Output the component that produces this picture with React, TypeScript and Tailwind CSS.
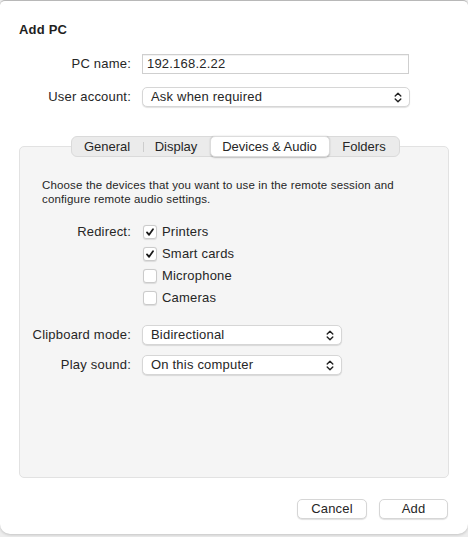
import React from "react";

const font = { fontFamily: '"Liberation Sans", Arial, sans-serif' };

function Chevrons() {
  return (
    <svg width="8" height="11" viewBox="0 0 8 11" fill="none" stroke="#222" strokeWidth="1.4" strokeLinecap="round" strokeLinejoin="round">
      <path d="M1.2 4 L4 1.2 L6.8 4" />
      <path d="M1.2 7 L4 9.8 L6.8 7" />
    </svg>
  );
}

function Select({ value, width }: { value: string; width: string }) {
  return (
    <div
      className={`${width} h-[20px] flex items-center justify-between pl-[8px] pr-[7px] bg-white rounded-[5px] border border-[#d6d6d6] shadow-[0_1px_1px_rgba(0,0,0,0.12)] text-[13px] text-[#262626]`}
    >
      <span>{value}</span>
      <Chevrons />
    </div>
  );
}

function Checkbox({ checked, label }: { checked: boolean; label: string }) {
  return (
    <div className="h-[22px] flex items-center">
      <div className="w-[14px] h-[14px] ml-[1px] rounded-[3px] bg-white border border-[#cbcbcb] shadow-[0_0.5px_1px_rgba(0,0,0,0.1)] flex items-center justify-center">
        {checked && (
          <svg width="10" height="10" viewBox="0 0 10 10" fill="none" stroke="#1a1a1a" strokeWidth="1.8" strokeLinecap="round" strokeLinejoin="round">
            <path d="M2 5.4 L4.1 7.8 L8 2.2" />
          </svg>
        )}
      </div>
      <span className="ml-[5px] text-[13px] text-[#262626]">{label}</span>
    </div>
  );
}

export default function App() {
  const tabs = [
    { name: "General", w: "w-[71px]" },
    { name: "Display", w: "w-[67px]" },
    { name: "Devices & Audio", w: "w-[120px]" },
    { name: "Folders", w: "w-[69px]" },
  ];
  return (
    <div className="w-[468px] h-[537px] bg-[#ededed] tracking-[0.2px]" style={font}>
      <div className="w-[468px] h-[534px] bg-white rounded-t-[5px] rounded-b-[10px] border-t border-[#b8b8b8] shadow-[0_1px_3px_rgba(0,0,0,0.18)] flex flex-col px-[19px]">
        <div className="pt-[21px] text-[13px] leading-[16px] font-bold text-[#1f1f1f]">Add PC</div>

        <div className="mt-[16px] grid grid-cols-[112px_1fr] gap-x-[11px] gap-y-[13px] items-center">
          <div className="text-right text-[13px] text-[#262626]">PC name:</div>
          <div className="w-[267px] h-[20px] flex items-center pl-[4px] bg-white border border-[#cfcfcf] shadow-[inset_0_1px_0_rgba(0,0,0,0.05)] text-[13px] text-[#262626]">
            192.168.2.22
          </div>
          <div className="text-right text-[13px] text-[#262626]">User account:</div>
          <Select value="Ask when required" width="w-[268px]" />
        </div>

        <div className="mt-[29px] flex flex-col">
          <div className="relative z-10 flex justify-center pl-[2px]">
            <div className="h-[21px] flex items-stretch bg-[#ebebeb] border border-[#dadada] rounded-[6px] text-[13px] text-[#262626] tracking-normal">
              {tabs.map((t, i) => {
                const active = t.name === "Devices & Audio";
                return (
                  <div key={t.name} className="relative flex items-stretch">
                    {i === 1 && <div className="absolute left-0 top-[5px] w-px h-[10px] bg-[#cdcdcd]" />}
                    <div
                      className={`${t.w} flex items-center justify-center ${
                        active ? "bg-white rounded-[5px] shadow-[0_0.5px_1.5px_rgba(0,0,0,0.22)] border border-[#dcdcdc] -my-px" : ""
                      }`}
                    >
                      {t.name}
                    </div>
                  </div>
                );
              })}
            </div>
          </div>
          <div className="-mt-[11px] h-[332px] bg-[#f5f5f5] border border-[#e2e2e2] rounded-[5px] flex flex-col">
            <div className="mt-[31px] pl-[22px] pr-[10px] text-[11.5px] leading-[14px] tracking-[0.15px] text-[#262626]">
              Choose the devices that you want to use in the remote session and
              <br />
              configure remote audio settings.
            </div>
            <div className="mt-[15px] grid grid-cols-[111px_1fr] gap-x-[11px] items-start">
              <div className="h-[22px] flex items-center justify-end text-[13px] text-[#262626]">Redirect:</div>
              <div className="flex flex-col">
                <Checkbox checked label="Printers" />
                <Checkbox checked label="Smart cards" />
                <Checkbox checked={false} label="Microphone" />
                <Checkbox checked={false} label="Cameras" />
              </div>
            </div>
            <div className="mt-[16px] grid grid-cols-[111px_1fr] gap-x-[11px] gap-y-[10px] items-center">
              <div className="text-right text-[13px] text-[#262626]">Clipboard mode:</div>
              <Select value="Bidirectional" width="w-[200px]" />
              <div className="text-right text-[13px] text-[#262626]">Play sound:</div>
              <Select value="On this computer" width="w-[200px]" />
            </div>
          </div>
        </div>

        <div className="mt-[21px] flex justify-end gap-[12px] pr-[1px]">
          <div className="w-[70px] h-[20px] flex items-center justify-center bg-white rounded-[5px] border border-[#d6d6d6] shadow-[0_1px_1px_rgba(0,0,0,0.12)] text-[13px] text-[#262626]">
            Cancel
          </div>
          <div className="w-[69px] h-[20px] flex items-center justify-center bg-white rounded-[5px] border border-[#d6d6d6] shadow-[0_1px_1px_rgba(0,0,0,0.12)] text-[13px] text-[#262626]">
            Add
          </div>
        </div>
      </div>
    </div>
  );
}
